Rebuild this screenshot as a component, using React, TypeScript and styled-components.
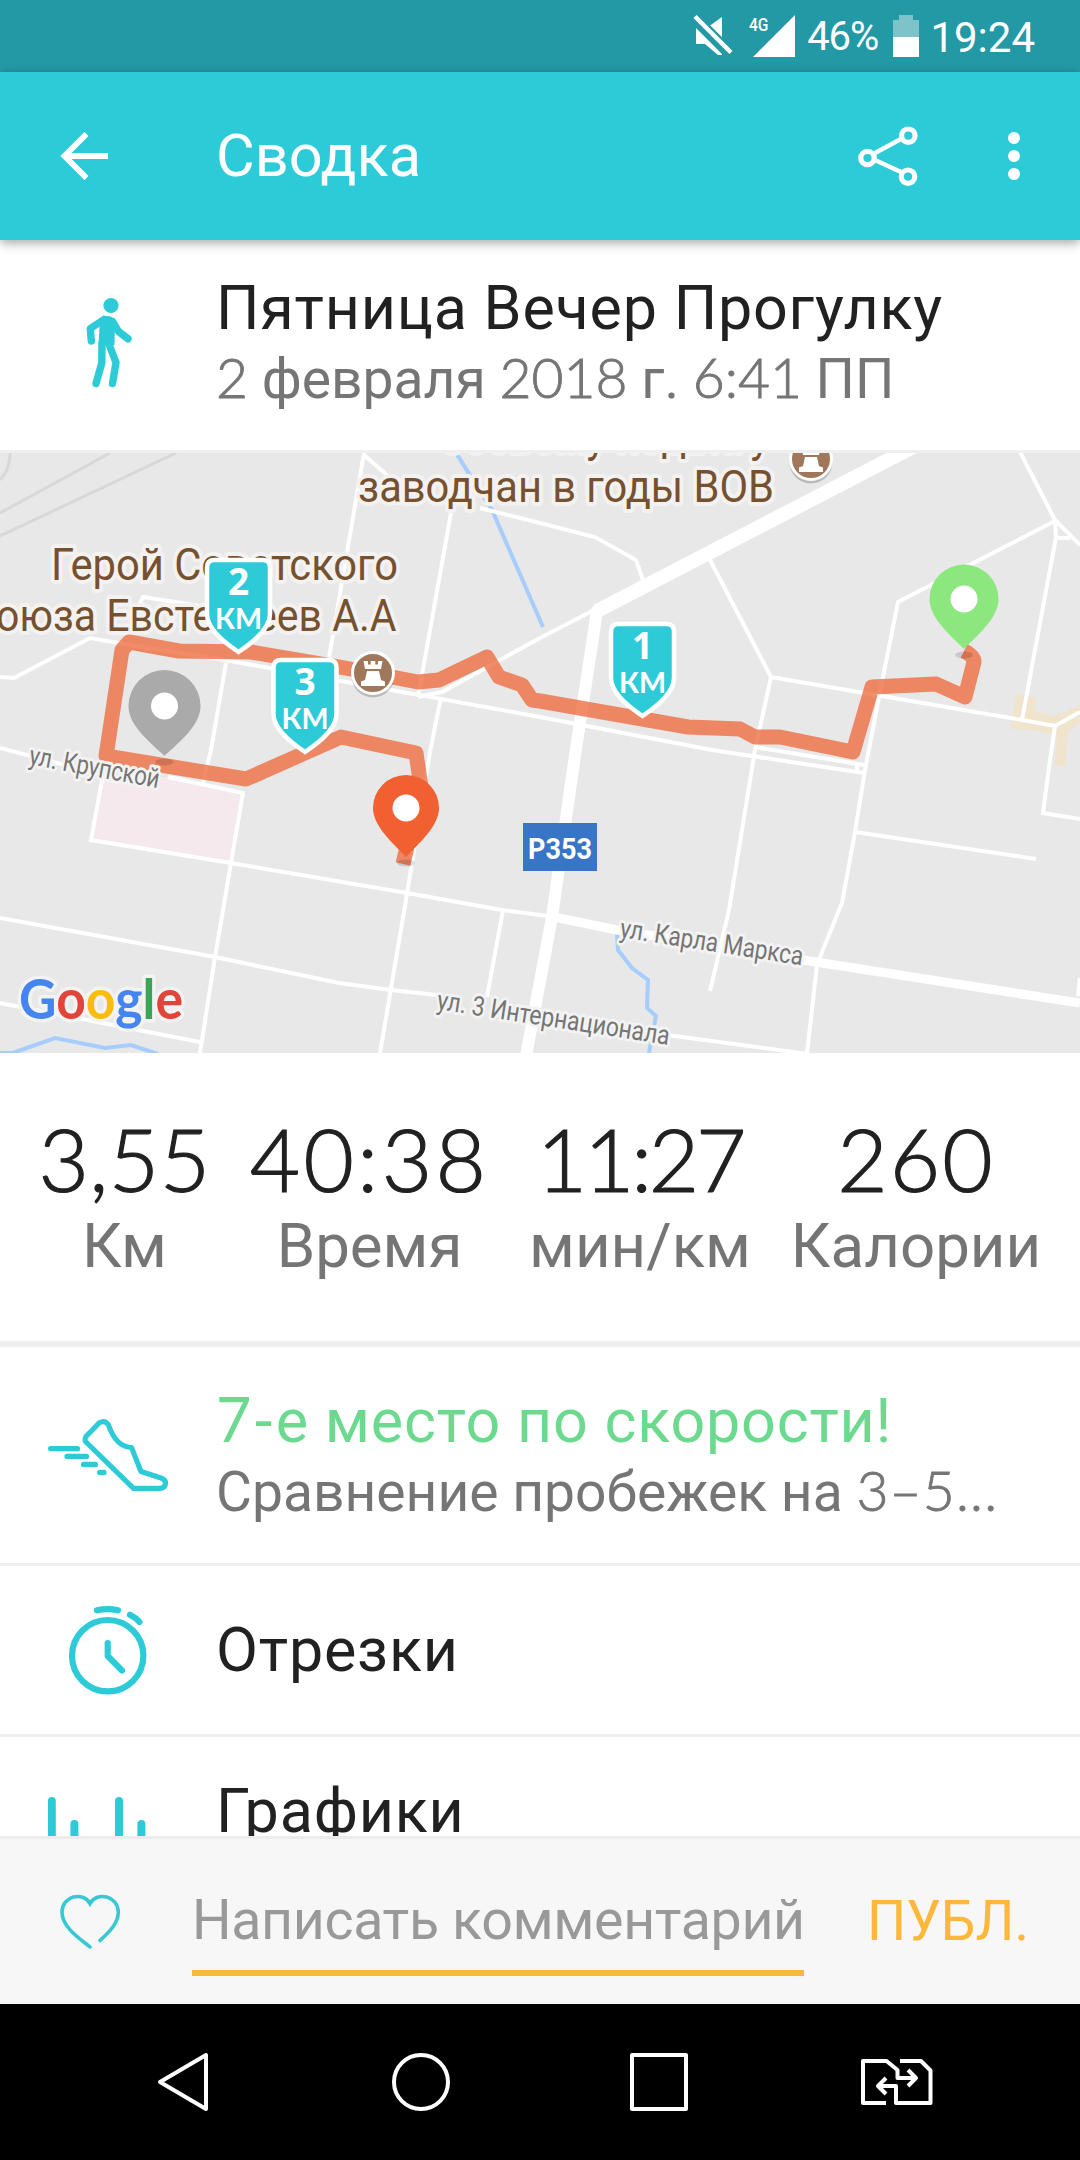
import styled, { createGlobalStyle } from "styled-components";

const ACCENT = "#2dcbd8";

interface Stat {
  value: string;
  label: string;
  spacing: number;
}

const stats: Stat[] = [
  { value: "3,55", label: "Км", spacing: 0.4 },
  { value: "40:38", label: "Время", spacing: 3.4 },
  { value: "11:27", label: "мин/км", spacing: -3.2 },
  { value: "260", label: "Калории", spacing: 2 },
];

// Map geometry, in map units (1 unit = 1px)
const streets = [
  "M364 453 L329 658",
  "M364 455 L387 475",
  "M480 508 L540 523 L595 537 L636 560 L643 580",
  "M451 513 L418 697",
  "M0 677 L14 678 L90 638 L130 645",
  "M133 618 L143 597 L320 625",
  "M130 645 L225 660 L540 717 L712 750 L864 773",
  "M755 747 L864 765 M857 764 V773",
  "M226 663 L211 750 L203 783",
  "M441 697 L430 752 L406 900 L380 1053",
  "M418 697 L442 692 L540 638 L596 609",
  "M0 748 L103 775 L91 840 L231 863 L407 893 L502 910 L555 917",
  "M168 777 L243 793 L231 863 L215 957 L200 1053",
  "M0 918 L215 957 L339 983 L391 990 L437 995",
  "M667 1035 L808 1054",
  "M503 910 L487 997",
  "M0 1003 L200 1042",
  "M709 558 L771 677 L755 750 L729 910 L710 991",
  "M771 677 L864 693 L1022 720 L1055 726 L1080 712",
  "M1055 726 L1050 760 L1043 813 L1080 819",
  "M1019 450 L1055 520 L1080 545",
  "M1055 521 L898 602 L879 697 L865 770 L855 832 L842 903 L822 952 L817 965 L807 1053",
  "M1055 520 L1056 537 L1022 720",
  "M1056 538 H1070",
  "M855 832 L1036 859",
  "M1080 978 L1078 996",
];

const route =
  "M964 651 Q974 656 974 662 L965 697 L936 684 L872 687 L853 752 L780 737 L755 737 L740 729 L688 727 L540 701 L532 700 L522 685 L499 677 L487 657 L439 680 L418 682 L345 668 L251 652 L179 651 L129 642 L122 650 L106 756 L246 779 L341 737 L416 753 L421 787 L403 864";

function Pin(props: { x: number; y: number; r: number; tip: number; color: string }) {
  const { x, y, r, tip, color } = props;
  return (
    <g transform={`translate(${x} ${y})`}>
      <ellipse cx={0} cy={tip + 6} rx={9} ry={3.5} fill="rgba(0,0,0,0.13)" />
      <path
        d={`M${-r} 0 A${r} ${r} 0 0 1 ${r} 0 C${r} ${r * 0.55} ${r * 0.4} ${tip - 14} 0 ${tip} C${-r * 0.4} ${tip - 14} ${-r} ${r * 0.55} ${-r} 0 Z`}
        fill={color}
      />
      <circle r={13.5} fill="#fff" />
    </g>
  );
}

function Shield(props: { x: number; y: number; km: number }) {
  return (
    <g transform={`translate(${props.x} ${props.y})`}>
      <path
        d="M-24 1 H24 Q31.500 1 31.500 8.500 V55 C31.500 71 12 85 0 93 C-12 85 -31.500 71 -31.500 55 V8.500 Q-31.500 1 -24 1 Z"
        fill={ACCENT}
        stroke="#fff"
        strokeWidth={4.5}
      />
      <ShieldNumber x={0} y={35.5}>
        {props.km}
      </ShieldNumber>
      <ShieldUnit x={0} y={70} textLength={47} lengthAdjust="spacingAndGlyphs">
        КМ
      </ShieldUnit>
    </g>
  );
}

function Castle(props: { x: number; y: number }) {
  return (
    <g transform={`translate(${props.x} ${props.y})`}>
      <circle cy={3} r={21.5} fill="rgba(0,0,0,0.2)" />
      <circle r={20.5} fill="#a0775a" stroke="#fff" strokeWidth={3} />
      <path
        d="M-9.500 -12 H-5 V-8.500 H-2.300 V-12 H2.300 V-8.500 H5 V-12 H9.500 L8 -4 H-8 Z M-6 -2 H6 L8 7 L12 8.500 V13 H-12 V8.500 L-8 7 Z"
        fill="#fff"
      />
    </g>
  );
}

function RouteMap() {
  return (
    <MapSvg viewBox="0 453 1080 600">
      <rect y={453} width={1080} height={600} fill="#e8e8e8" />
      <path
        d="M0 513 L110 453 M0 536 L176 453 M0 480 Q10 470 10 453"
        fill="none"
        stroke="#d8d8d8"
        strokeWidth={3}
      />
      <path
        d="M1015 694 L1036 698 L1035 711 L1056 716 L1080 705 V722 L1068 732 L1066 766 L1055 765 L1057 735 L1038 731 L1011 729 Z"
        fill="#f0e4cd"
      />
      <path d="M103 777 L168 777 L243 793 L231 863 L91 840 Z" fill="#f6e9ee" />
      <g fill="none" stroke="#a6cdfb" strokeWidth={4}>
        <path d="M456 453 L492 510 L543 627" />
        <path d="M617 933 L618 950 L632 968 L648 980 L647 1008 L656 1016 L649 1053" />
        <path d="M10 1054 L55 1038 L105 1048 L131 1045 L158 1054 M0 1053 H16" />
      </g>
      <path d={streets.join(" ")} fill="none" stroke="#fff" strokeWidth={4} />
      <g fill="none" stroke="#fff" strokeLinejoin="round">
        <path d="M554 917 L617 930 L822 963 L1080 1003" strokeWidth={9} />
        <path d="M915 446 L597 611 L574 762 L552 917 L526 1056" strokeWidth={12} />
        <path d="M915 446 L597 611" strokeWidth={14} />
      </g>

      <PlaceLabel textAnchor="end" transform="translate(770 452) scale(0.932 1)">
        боевому подвигу
      </PlaceLabel>
      <PlaceLabel x={358} y={501.5} textLength={416} lengthAdjust="spacingAndGlyphs">
        заводчан в годы ВОВ
      </PlaceLabel>
      <PlaceLabel x={51} y={580} textLength={347} lengthAdjust="spacingAndGlyphs">
        Герой Советского
      </PlaceLabel>
      <PlaceLabel textAnchor="end" transform="translate(396.500 630.500) scale(0.932 1)">
        Союза Евстегнеев А.А
      </PlaceLabel>

      <path
        d={route}
        fill="none"
        stroke="#ee6a3c"
        strokeOpacity={0.78}
        strokeWidth={15}
        strokeLinejoin="round"
      />

      <StreetLabel
        textLength={132}
        lengthAdjust="spacingAndGlyphs"
        transform="translate(28 764) rotate(10.500)"
      >
        ул. Крупской
      </StreetLabel>
      <StreetLabel
        textLength={185}
        lengthAdjust="spacingAndGlyphs"
        transform="translate(619 937) rotate(8.800)"
      >
        ул. Карла Маркса
      </StreetLabel>
      <StreetLabel
        textLength={235}
        lengthAdjust="spacingAndGlyphs"
        transform="translate(436 1009) rotate(8.800)"
      >
        ул. 3 Интернационала
      </StreetLabel>

      <rect x={523} y={823} width={74} height={48} fill="#3875c6" />
      <RoadNumber x={560} y={859} textLength={64} lengthAdjust="spacingAndGlyphs">
        Р353
      </RoadNumber>

      <Castle x={373} y={673} />
      <Castle x={811} y={459} />
      <Pin x={164.5} y={706} r={36} tip={50} color="#aaaaaa" />
      <Pin x={964} y={599} r={34.5} tip={50} color="#8ce87e" />
      <Pin x={406} y={808} r={33} tip={49} color="#f06030" />
      <Shield x={238.5} y={559} km={2} />
      <Shield x={305} y={659} km={3} />
      <Shield x={642.5} y={623} km={1} />

      <GoogleText x={19} y={1019} textLength={164} lengthAdjust="spacingAndGlyphs">
        <tspan fill="#4684f0">G</tspan>
        <tspan fill="#e14438">o</tspan>
        <tspan fill="#fabc0f">o</tspan>
        <tspan fill="#4684f0">g</tspan>
        <tspan fill="#3ba556">l</tspan>
        <tspan fill="#e14438">e</tspan>
      </GoogleText>
    </MapSvg>
  );
}

export default function App() {
  return (
    <Screen>
      <GlobalStyle />
      <StatusBar>
        <svg width={40} height={42} viewBox="0 0 40 42">
          <path d="M3 13 L20 30 L29 39 V40 H25 L12 29 H3 Z" fill="#fff" />
          <path d="M15 12 L29 2 V28 Z" fill="#fff" />
          <path d="M2 1.500 L38 37.500" stroke="#2499a6" strokeWidth={9} />
          <path d="M2 1.500 L38 37.500" stroke="#fff" strokeWidth={4.4} />
        </svg>
        <Signal>
          <NetworkType>4G</NetworkType>
          <svg width={45} height={42} viewBox="0 0 45 42">
            <path d="M3 42 L45 0 V42 Z" fill="#fff" />
          </svg>
        </Signal>
        <Percent>46%</Percent>
        <svg width={26} height={42} viewBox="0 0 26 42">
          <path d="M6 0 H20 V5 H26 V22 H0 V5 H6 Z" fill="#7fc3ca" />
          <rect y={22} width={26} height={20} fill="#fff" />
        </svg>
        <Clock>19:24</Clock>
      </StatusBar>

      <Toolbar>
        <svg width={48} height={48} viewBox="0 0 48 48">
          <path
            d="M26.500 2 L4.500 24 L26.500 46 M4.500 24 H48"
            fill="none"
            stroke="#fff"
            strokeWidth={5.8}
          />
        </svg>
        <ToolbarTitle>Сводка</ToolbarTitle>
        <svg width={60} height={62} viewBox="0 0 60 62">
          <g fill="none" stroke="#fff">
            <path d="M43 14 L17 28 M43 47 L17 35" strokeWidth={4.4} />
            <circle cx={50.3} cy={10.7} r={6.7} strokeWidth={5.2} />
            <circle cx={9.5} cy={33} r={6.7} strokeWidth={5.2} />
            <circle cx={50} cy={51.7} r={6.7} strokeWidth={5.2} />
          </g>
        </svg>
        <Dots>
          <i />
          <i />
          <i />
        </Dots>
      </Toolbar>

      <Content>
        <Row $height={210} $top={32}>
          <IconCell>
            <svg width={120} height={120} viewBox="0 0 120 120">
              <circle cx={63} cy={20.5} r={7.6} fill={ACCENT} />
              <path d="M52 34 Q60 28 67 34 L66.500 60 H50.500 Z" fill={ACCENT} />
              <g
                fill="none"
                stroke={ACCENT}
                strokeWidth={7.4}
                strokeLinecap="round"
                strokeLinejoin="round"
              >
                <path d="M56 34.500 L42.300 43.500 L43.300 56" />
                <path d="M65 37 L70.500 46.500 L80 53.800" />
                <path d="M54 58 L53.800 78 L48 98.500" />
                <path d="M60.500 58 L68 77.500 L64.500 98.500" />
              </g>
            </svg>
          </IconCell>
          <Texts>
            <Title>Пятница Вечер Прогулку</Title>
            <Subtitle>
              <Digits>2</Digits> февраля <Digits>2018</Digits> г. <Digits>6:41</Digits> ПП
            </Subtitle>
          </Texts>
        </Row>
        <Divider />
        <RouteMap />
        <Stats>
          {stats.map((stat) => (
            <StatCell key={stat.label}>
              <StatValue $spacing={stat.spacing}>{stat.value}</StatValue>
              <StatLabel>{stat.label}</StatLabel>
            </StatCell>
          ))}
        </Stats>
        <Divider $size={6} />
        <Row $height={216} $top={38}>
          <IconCell>
            <svg width={120} height={120} viewBox="0 0 120 120">
              <g
                fill="none"
                stroke={ACCENT}
                strokeWidth={5.2}
                strokeLinecap="round"
                strokeLinejoin="round"
              >
                <path d="M51 28 Q57 24.500 60.500 30 Q68 52 83.500 52.500 L93 76.500 L113 83 Q118 85 117.500 88.500 Q117 93.300 112 93.300 H85.500 L37.500 46.500 Q36.500 44 38 41.500 Z" />
                <path d="M2.500 53.700 H29.500 M19 61.400 H38.500 M35.500 69.400 H47.500 M51.700 77.400 H56" />
              </g>
            </svg>
          </IconCell>
          <Texts>
            <Title $color="#6bda8e">
              <Digits $bold>7-</Digits>е место по скорости!
            </Title>
            <Subtitle>
              Сравнение пробежек на <Digits $spacing={1.2}>3–5...</Digits>
            </Subtitle>
          </Texts>
        </Row>
        <Divider />
        <Row $height={168} $center>
          <IconCell>
            <svg width={120} height={120} viewBox="0 0 120 120">
              <g fill="none" stroke={ACCENT} strokeWidth={6.2} strokeLinecap="round">
                <circle cx={59.7} cy={65.7} r={35.7} />
                <path d="M59.700 53 V66 L74 80.500" strokeLinejoin="round" />
                <path d="M49 20.300 Q59.700 17.800 70 20.300 M82 24.800 Q88 28 91.500 32" />
              </g>
            </svg>
          </IconCell>
          <Title>Отрезки</Title>
        </Row>
        <Divider />
        <Row $height={216} $top={38}>
          <IconCell>
            <svg width={120} height={120} viewBox="0 0 120 120">
              <path
                d="M3.800 16 V104 M26.400 39 V104 M71 16 V104 M93.400 39 V104"
                stroke={ACCENT}
                strokeWidth={8}
                strokeLinecap="round"
              />
            </svg>
          </IconCell>
          <Texts>
            <Title>Графики</Title>
          </Texts>
        </Row>
      </Content>

      <CommentBar>
        <svg width={60} height={56} viewBox="0 0 60 56">
          <path
            d="M30 53 C22 46 2 34 2 18 C2 2 23 -3 30 9.500 C37 -3 58.300 2 58.300 18 C58.300 30 48 39 40 46.500"
            fill="none"
            stroke="#37c8d4"
            strokeWidth={3.6}
            strokeLinecap="round"
          />
        </svg>
        <CommentInput placeholder="Написать комментарий" />
        <PublishButton>ПУБЛ.</PublishButton>
      </CommentBar>

      <NavBar>
        <svg width={60} height={60} viewBox="0 0 60 60">
          <path d="M53 3 V57 L7 30 Z" />
        </svg>
        <svg width={60} height={60} viewBox="0 0 60 60">
          <circle cx={30} cy={30} r={27} />
        </svg>
        <svg width={60} height={60} viewBox="0 0 60 60">
          <rect x={3} y={3} width={54} height={54} />
        </svg>
        <svg width={76} height={60} viewBox="0 0 76 60">
          <path d="M27 51 H4 V9 H27.500 L38.500 18 V26 H56 M49 18 L57 26 L49 34" />
          <path d="M41 9 H62 L71.500 18.500 V51 H37 V34 H20 M27 26 L19 34 L27 42" />
        </svg>
      </NavBar>
    </Screen>
  );
}

const GlobalStyle = createGlobalStyle`
  body {
    margin: 0;
    background: #fff;
  }
`;

const Screen = styled.div`
  width: 1080px;
  height: 2160px;
  display: flex;
  flex-direction: column;
  overflow: hidden;
  background: #fff;
  font-family: Roboto, "Noto Sans", sans-serif;
  color: #212121;
`;

const StatusBar = styled.div`
  box-sizing: border-box;
  height: 72px;
  padding: 0 45px 0 0;
  display: flex;
  align-items: center;
  justify-content: flex-end;
  background: #2499a6;
  color: #fff;
  flex-shrink: 0;
`;

const Signal = styled.div`
  display: flex;
  height: 42px;
  margin-left: 16px;
`;

const NetworkType = styled.span`
  font-size: 19px;
  font-weight: 500;
  line-height: 20px;
  transform: scaleX(0.82);
  transform-origin: left;
  height: 20px;
  margin-right: -23px;
`;

const Percent = styled.span`
  font-size: 40px;
  letter-spacing: -1px;
  line-height: 72px;
  margin: 2px 15px 0 12px;
`;

const Clock = styled.span`
  font-size: 42px;
  line-height: 72px;
  margin: 3px 0 0 11px;
`;

const Toolbar = styled.header`
  box-sizing: border-box;
  position: relative;
  z-index: 1;
  height: 168px;
  padding: 0 60px;
  display: flex;
  align-items: center;
  background: ${ACCENT};
  color: #fff;
  box-shadow: 0 3px 10px rgba(0, 0, 0, 0.35);
  flex-shrink: 0;
`;

const ToolbarTitle = styled.h1`
  margin: 0 0 0 108px;
  flex: 1;
  font-size: 59.5px;
  font-weight: 400;
  line-height: 72px;
`;

const Dots = styled.div`
  display: flex;
  flex-direction: column;
  gap: 6px;
  margin-left: 90px;
  i {
    width: 12px;
    height: 12px;
    border-radius: 50%;
    background: #fff;
  }
`;

const Content = styled.main`
  flex: 1;
  min-height: 0;
  overflow: hidden;
`;

const Row = styled.section<{ $height: number; $top?: number; $center?: boolean }>`
  box-sizing: border-box;
  height: ${(p) => p.$height}px;
  display: grid;
  grid-template-columns: 216px 1fr;
  align-items: ${(p) => (p.$center ? "center" : "start")};
  > :last-child {
    margin-top: ${(p) => p.$top ?? 0}px;
  }
`;

const IconCell = styled.div`
  height: 100%;
  display: flex;
  align-items: center;
  justify-content: center;
`;

const Texts = styled.div`
  white-space: nowrap;
`;

const Title = styled.h2<{ $color?: string }>`
  margin: 0;
  font-size: 61px;
  font-weight: 400;
  line-height: 72px;
  letter-spacing: 0.8px;
  color: ${(p) => p.$color ?? "#212121"};
`;

const Subtitle = styled.p`
  margin: 2px 0 0;
  font-size: 55.2px;
  line-height: 66px;
  color: #757575;
`;

const Digits = styled.span<{ $bold?: boolean; $spacing?: number }>`
  font-family: Lato, sans-serif;
  font-weight: ${(p) => (p.$bold ? 400 : 300)};
  line-height: 0;
  letter-spacing: ${(p) => (p.$spacing ? `${p.$spacing}px` : "inherit")};
  -webkit-text-stroke: ${(p) => (p.$bold ? 0 : 0.9)}px currentColor;
`;

const Divider = styled.div<{ $size?: number }>`
  height: ${(p) => p.$size ?? 3}px;
  background: #efefef;
`;

const MapSvg = styled.svg`
  display: block;
  width: 1080px;
  height: 600px;
`;

const PlaceLabel = styled.text`
  font-size: 44px;
  fill: #75512f;
  stroke: #f4f2f0;
  stroke-width: 8px;
  stroke-linejoin: round;
  paint-order: stroke;
`;

const StreetLabel = styled.text`
  font-size: 27px;
  fill: #757575;
  stroke: #f3f3f3;
  stroke-width: 6px;
  stroke-linejoin: round;
  paint-order: stroke;
`;

const RoadNumber = styled.text`
  font-size: 30px;
  font-weight: 700;
  fill: #fff;
  text-anchor: middle;
`;

const ShieldNumber = styled.text`
  font-family: "Open Sans", sans-serif;
  font-size: 37px;
  font-weight: 700;
  fill: #fff;
  text-anchor: middle;
`;

const ShieldUnit = styled.text`
  font-family: Lato, "Open Sans", sans-serif;
  font-size: 29px;
  font-weight: 700;
  fill: #fff;
  text-anchor: middle;
`;

const GoogleText = styled.text`
  font-family: Lato, sans-serif;
  font-size: 55px;
  font-weight: 700;
  stroke: #f3f3f3;
  stroke-width: 7px;
  stroke-linejoin: round;
  paint-order: stroke;
`;

const Stats = styled.section`
  box-sizing: border-box;
  height: 288px;
  padding: 56px 42px 0;
  display: grid;
  grid-template-columns: 165px 233px 216px 244px;
  gap: 46px;
`;

const StatCell = styled.div`
  display: flex;
  flex-direction: column;
  align-items: center;
  white-space: nowrap;
`;

const StatValue = styled.div<{ $spacing: number }>`
  font-family: Lato, sans-serif;
  font-size: 87px;
  font-weight: 300;
  line-height: 100px;
  letter-spacing: ${(p) => p.$spacing}px;
  -webkit-text-stroke: 1.2px currentColor;
`;

const StatLabel = styled.div`
  margin-top: 1px;
  font-size: 61.8px;
  line-height: 72px;
  color: #757575;
`;

const CommentBar = styled.div`
  box-sizing: border-box;
  height: 168px;
  padding: 0 50px 0 60px;
  display: flex;
  align-items: center;
  background: #f7f7f7;
  border-top: 3px solid #ececec;
  flex-shrink: 0;
`;

const CommentInput = styled.input`
  box-sizing: border-box;
  width: 612px;
  height: 109px;
  margin: 0 0 0 72px;
  padding: 3px 0 0;
  border: none;
  border-bottom: 6px solid #fdb73a;
  background: none;
  font-family: inherit;
  font-size: 55.5px;
  letter-spacing: -0.35px;
  outline: none;
  &::placeholder {
    color: #999;
    opacity: 1;
  }
`;

const PublishButton = styled.button`
  margin: 0 0 2px 63px;
  padding: 0;
  border: none;
  background: none;
  font-family: inherit;
  font-size: 55px;
  line-height: 66px;
  color: #fdb73a;
`;

const NavBar = styled.nav`
  box-sizing: border-box;
  height: 156px;
  padding: 0 64px;
  display: grid;
  grid-template-columns: repeat(4, 238px);
  align-items: center;
  justify-items: center;
  background: #000;
  flex-shrink: 0;
  svg {
    fill: none;
    stroke: #fff;
    stroke-width: 4px;
    stroke-linejoin: round;
  }
`;
